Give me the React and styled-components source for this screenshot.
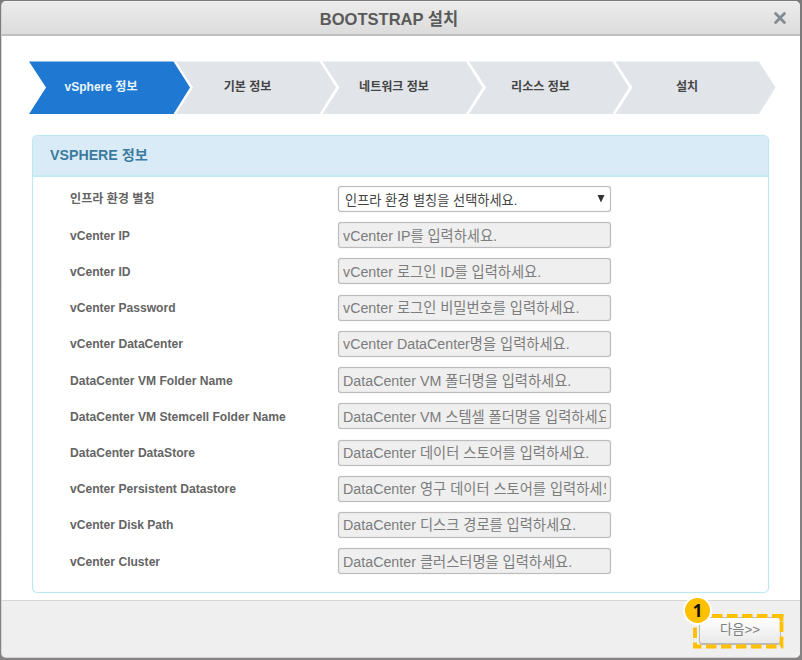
import React from "react";
import styled, { createGlobalStyle } from "styled-components";

const GlobalStyle = createGlobalStyle`
  * { box-sizing: border-box; }
  body {
    margin: 0;
    background: #7c7a7b;
    font-family: "Liberation Sans", "Noto Sans CJK KR", sans-serif;
    overflow: hidden;
  }
`;

const Backdrop = styled.div`
  height: 660px;
  padding: 1px 2px 2px 1px;
  background: linear-gradient(#7c7a7b, #858384);
`;

const Dialog = styled.div`
  height: 657px;
  display: flex;
  flex-direction: column;
  background: #fff;
  border-radius: 5px;
  overflow: hidden;
  border-left: 1px solid #d5d5d5;
  border-bottom: 1px solid #d0d0d0;
`;

const TitleBar = styled.header`
  flex: none;
  height: 35px;
  display: flex;
  align-items: center;
  padding: 0 14px 0 2px;
  background: linear-gradient(#ececec, #dcdcdc);
  border-top: 1px solid #f0f0f0;
  border-bottom: 2px solid #bfbfbf;
`;

const Title = styled.h1`
  flex: 1;
  margin: 4px 0 0;
  text-align: center;
  font-size: 16.55px;
  line-height: 24px;
  color: #5a5a5a;
`;

const CloseButton = styled.button`
  display: flex;
  padding: 0;
  border: 0;
  background: none;
`;

const Body = styled.main`
  flex: 1;
  padding: 25px 31px 0 27px;
`;

const Steps = styled.nav`
  display: flex;
  height: 53px;
`;

const Step = styled.div`
  flex: none;
  width: 161px;
  height: 53px;
  padding: 0 17px 5px 0;
  display: flex;
  align-items: center;
  justify-content: center;
  font-size: 12.05px;
  font-weight: bold;
  color: ${(p) => (p.$active ? "#e9f5ff" : "#444")};
  background: ${(p) => (p.$active ? "#1f78d1" : "#e1e4e9")};
  clip-path: polygon(0 0.5px, 144.5px 0.5px, 100% 50%, 144.5px 100%, 0 100%, 17px 50%);
  & + & {
    margin-left: -14.5px;
    clip-path: polygon(0.5px 0.5px, 144px 0.5px, 160.5px 50%, 144px 100%, 0.5px 100%, 17.5px 50%);
  }
`;

const Panel = styled.section`
  height: 458px;
  margin: 21px 0 0 3px;
  width: 737px;
  border: 1px solid #bce8f1;
  border-radius: 5px;
  box-shadow: 0 0 1px #bce8f1, inset 0 0 1px #bce8f1;
`;

const PanelTitle = styled.h2`
  height: 41px;
  margin: 0;
  padding: 0 0 3px 17px;
  display: flex;
  align-items: center;
  font-size: 14.2px;
  color: #3d7b9e;
  background: #d8ebf6;
  border-bottom: 2px solid #c3ebf2;
  border-radius: 4px 4px 0 0;
`;

const Fields = styled.div`
  padding: 9px 0 0 37px;
  display: grid;
  grid-template-columns: 268px 275px;
  grid-auto-rows: 36.22px;
`;

const Label = styled.label`
  height: ${(p) => (p.$raised ? "23px" : "27px")};
  display: flex;
  align-items: center;
  font-size: 12.1px;
  font-weight: bold;
  color: #646464;
  white-space: nowrap;
`;

const TextInput = styled.input`
  width: 273px;
  height: 26px;
  padding: 1px 4px 0;
  border: 1px solid #bcbcbc;
  border-radius: 3px;
  box-shadow: 0 0 1px #c0c0c0, inset 0 0 1px #bbb;
  background: #efefef;
  font: 14.28px "Liberation Sans", "Noto Sans CJK KR", sans-serif;
  &::placeholder { color: #7c7c7c; opacity: 1; }
`;

const SelectBox = styled.div`
  width: 273px;
  height: 26px;
  padding: 0 5px 0 6px;
  display: flex;
  align-items: center;
  justify-content: space-between;
  border: 1px solid #bcbcbc;
  border-radius: 3px;
  box-shadow: 0 0 1px #c0c0c0, inset 0 0 1px #bbb;
  background: #fff;
  font-size: 13.2px;
  color: #444;
`;

const Footer = styled.footer`
  flex: none;
  height: 57px;
  display: flex;
  justify-content: flex-end;
  padding: 13px 16px 0 0;
  border-top: 1px solid #d6d6d6;
  background: #efefef;
`;

const Highlight = styled.div`
  position: relative;
  width: 91px;
  height: 35px;
  padding: 3px 4px 4px 6px;
`;

const DashedFrame = styled.svg`
  position: absolute;
  left: 0;
  top: 0;
`;

const NextButton = styled.button`
  width: 82px;
  height: 28px;
  padding: 0 0 4px;
  border: 1px solid #bdbdbd;
  border-bottom: 2px solid #b9b9b9;
  border-radius: 4px;
  background: linear-gradient(#fff, #e9e9e9);
  font: 13.3px "Liberation Sans", "Noto Sans CJK KR", sans-serif;
  color: #7d7d7d;
`;

const Marker = styled.span`
  position: absolute;
  left: -10px;
  top: -18px;
  width: 29px;
  height: 29px;
  display: flex;
  align-items: center;
  justify-content: center;
  border: 2px solid #fff;
  border-radius: 50%;
  background: #ffc000;
  font: bold 17px "Open Sans", sans-serif;
  color: #111;
`;

const steps = ["vSphere 정보", "기본 정보", "네트워크 정보", "리소스 정보", "설치"];

const fields = [
  ["vCenter IP", "vCenter IP를 입력하세요."],
  ["vCenter ID", "vCenter 로그인 ID를 입력하세요."],
  ["vCenter Password", "vCenter 로그인 비밀번호를 입력하세요."],
  ["vCenter DataCenter", "vCenter DataCenter명을 입력하세요."],
  ["DataCenter VM Folder Name", "DataCenter VM 폴더명을 입력하세요."],
  ["DataCenter VM Stemcell Folder Name", "DataCenter VM 스템셀 폴더명을 입력하세요."],
  ["DataCenter DataStore", "DataCenter 데이터 스토어를 입력하세요."],
  ["vCenter Persistent Datastore", "DataCenter 영구 데이터 스토어를 입력하세요."],
  ["vCenter Disk Path", "DataCenter 디스크 경로를 입력하세요."],
  ["vCenter Cluster", "DataCenter 클러스터명을 입력하세요."],
];

export default function App() {
  return (
    <Backdrop>
      <GlobalStyle />
      <Dialog>
        <TitleBar>
          <Title>BOOTSTRAP 설치</Title>
          <CloseButton aria-label="닫기">
            <svg width="12" height="12" viewBox="0 0 12 12">
              <path d="M1.6 1.6L10.4 10.4M10.4 1.6L1.6 10.4" stroke="#818b91" strokeWidth="2.8" strokeLinecap="round" />
            </svg>
          </CloseButton>
        </TitleBar>
        <Body>
          <Steps>
            {steps.map((name, i) => (
              <Step key={name} $active={i === 0}>{name}</Step>
            ))}
          </Steps>
          <Panel>
            <PanelTitle>VSPHERE 정보</PanelTitle>
            <Fields>
              <Label $raised>인프라 환경 별칭</Label>
              <SelectBox role="combobox">
                <span>인프라 환경 별칭을 선택하세요.</span>
                <svg width="8" height="9" viewBox="0 0 8 9">
                  <path d="M0.5 0H7.5L4 7.5Z" fill="#333" />
                </svg>
              </SelectBox>
              {fields.map(([label, hint]) => (
                <React.Fragment key={label}>
                  <Label>{label}</Label>
                  <TextInput placeholder={hint} disabled />
                </React.Fragment>
              ))}
            </Fields>
          </Panel>
        </Body>
        <Footer>
          <Highlight>
            <NextButton>다음&gt;&gt;</NextButton>
            <DashedFrame width="91" height="35" viewBox="0 0 91 35">
              <path
                d="M18 2H88.5V32.5H2V2"
                fill="none"
                stroke="#ffc000"
                strokeWidth="3.8"
                strokeDasharray="10.5 4.5"
                strokeDashoffset="-1"
              />
              <path d="M84 2H88.5V7" fill="none" stroke="#ffc000" strokeWidth="3.8" />
            </DashedFrame>
            <Marker>1</Marker>
          </Highlight>
        </Footer>
      </Dialog>
    </Backdrop>
  );
}
